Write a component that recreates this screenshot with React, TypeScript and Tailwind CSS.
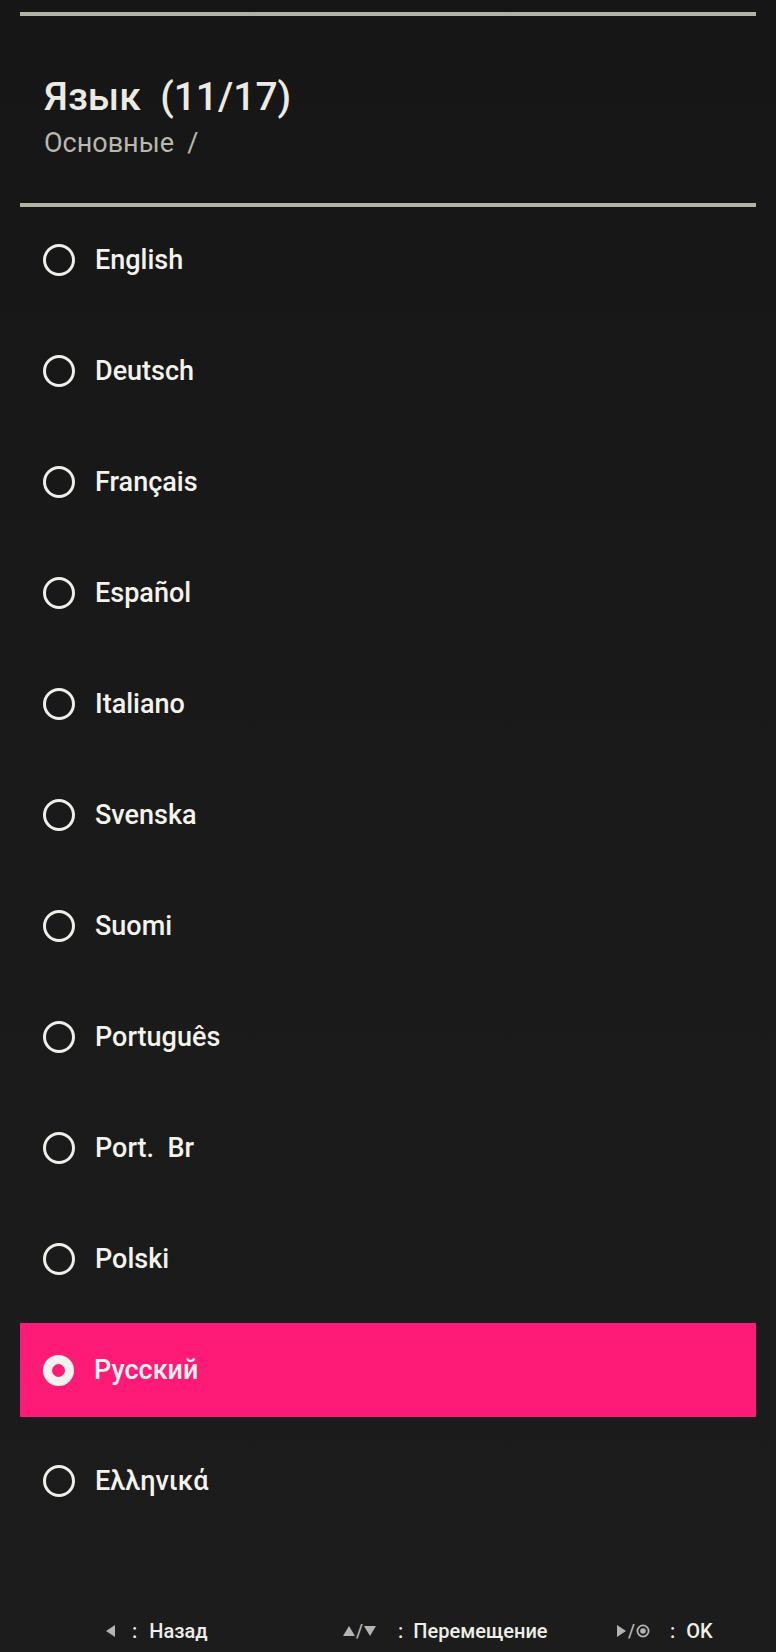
const languages = [
  "English",
  "Deutsch",
  "Français",
  "Español",
  "Italiano",
  "Svenska",
  "Suomi",
  "Português",
  "Port.  Br",
  "Polski",
  "Русский",
  "Ελληνικά",
];

const selected = "Русский";

function Radio({ on }: { on: boolean }) {
  if (on) {
    return (
      <div className="w-[31px] h-[31px] rounded-full border-[9px] border-[#f4f2ee] bg-[#fd1b77] shrink-0" />
    );
  }
  return <div className="w-[32px] h-[32px] rounded-full border-[3.5px] border-[#efeee8] shrink-0" />;
}

function Tri({ dir }: { dir: "left" | "up" | "down" | "right" }) {
  const pts = {
    left: "10,1 10,13 1,7",
    right: "1,1 1,13 10,7",
    up: "0,12 12,12 6,2",
    down: "0,2 12,2 6,12",
  }[dir];
  const w = dir === "left" || dir === "right" ? 11 : 12;
  return (
    <svg width={w} height="14" viewBox={`0 0 ${w} 14`} className="shrink-0">
      <polygon points={pts} fill="#b4b4b0" />
    </svg>
  );
}

function OkIcon() {
  return (
    <svg width="14" height="14" viewBox="0 0 14 14" className="shrink-0">
      <circle cx="7" cy="7" r="5.6" fill="none" stroke="#b4b4b0" strokeWidth="1.8" />
      <circle cx="7" cy="7" r="2.8" fill="#b4b4b0" />
    </svg>
  );
}

function Slash() {
  return <span className="text-[#b4b4b0] text-[18px] leading-none mx-[1px]">/</span>;
}

export default function App() {
  return (
    <div
      className="w-[776px] h-[1652px] bg-gradient-to-b from-[#161616] via-[#1a1a1a] to-[#1c1c1c] flex flex-col px-[20px] overflow-hidden"
      style={{ fontFamily: "Roboto, 'Noto Sans', sans-serif" }}
    >
      <div className="mt-[12px] h-[4px] bg-[#b3b3a4]" />

      <div className="pl-[24px] mt-[62px]">
        <h1 className="text-[39px] leading-none font-medium text-[#ecebe3] whitespace-pre">
          Язык  (11/17)
        </h1>
        <p className="mt-[13px] text-[27px] leading-none text-[#b9b8b0] whitespace-pre">
          Основные  /
        </p>
      </div>

      <div className="mt-[46px] h-[4px] bg-[#b3b3a4]" />

      <ul className="mt-[6px] flex flex-col gap-[17px]">
        {languages.map((lang) => {
          const on = lang === selected;
          return (
            <li
              key={lang}
              className={`h-[94px] flex items-center pl-[23px] gap-[20px] ${on ? "bg-[#fd1b77]" : ""}`}
            >
              <Radio on={on} />
              <span className="text-[27px] leading-none font-medium text-[#f3f2ec] whitespace-pre">
                {lang}
              </span>
            </li>
          );
        })}
      </ul>

      <div className="mt-auto mb-[11px] h-[20px] flex items-center text-[20px] leading-none font-medium text-[#eeeee8]">
        <div className="ml-[85px] w-[238px] flex items-center">
          <Tri dir="left" />
          <span className="ml-[16px]">:</span>
          <span className="ml-[12px]">Назад</span>
        </div>
        <div className="w-[273px] flex items-center">
          <Tri dir="up" />
          <Slash />
          <Tri dir="down" />
          <span className="ml-[22px]">:</span>
          <span className="ml-[10px]">Перемещение</span>
        </div>
        <div className="flex items-center">
          <Tri dir="right" />
          <Slash />
          <OkIcon />
          <span className="ml-[20px]">:</span>
          <span className="ml-[11px]">OK</span>
        </div>
      </div>
    </div>
  );
}
